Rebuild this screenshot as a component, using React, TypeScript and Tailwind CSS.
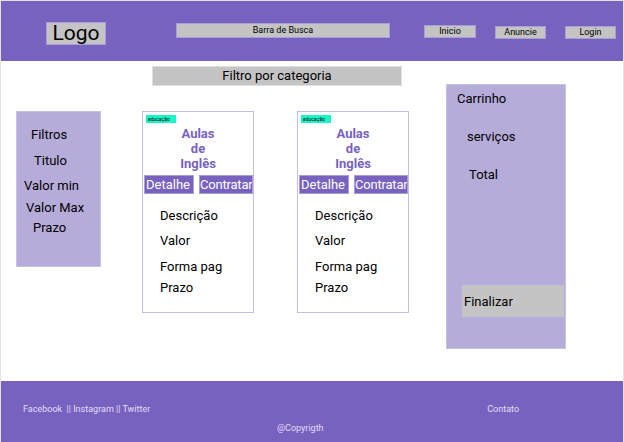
export default function App() {
  return (
    <div className="w-[624px] h-[442px] border border-[#e2e2e2] border-b-0 bg-white flex flex-col overflow-hidden font-['Roboto',sans-serif] text-black">
      {/* Header */}
      <header className="h-[60px] bg-[#7862bf] flex items-start shrink-0">
        <div className="ml-[45px] mt-[21px] w-[60px] h-[23px] bg-[#c4c4c4] border border-[#a99cd9] flex items-center justify-center text-[21px] leading-none">
          Logo
        </div>
        <div className="ml-[70px] mt-[22px] w-[214px] h-[15px] bg-[#c4c4c4] border border-[#a99cd9] flex items-center justify-center text-[9px] leading-none">
          Barra de Busca
        </div>
        <div className="ml-[34px] mt-[24px] w-[52px] h-[13px] bg-[#c4c4c4] border border-[#a99cd9] flex items-center justify-center text-[9px] leading-none">
          Inicio
        </div>
        <div className="ml-[19px] mt-[25px] w-[51px] h-[13px] bg-[#c4c4c4] border border-[#a99cd9] flex items-center justify-center text-[9px] leading-none">
          Anuncie
        </div>
        <div className="ml-[19px] mt-[25px] w-[51px] h-[13px] bg-[#c4c4c4] border border-[#a99cd9] flex items-center justify-center text-[9px] leading-none">
          Login
        </div>
      </header>

      {/* Main */}
      <main className="flex-1 flex items-start">
        <div className="flex flex-col">
          <div className="ml-[151px] mt-[5px] w-[250px] h-[20px] bg-[#c4c4c4] border border-[#e0e0e0] flex items-center justify-center text-[13px]">
            Filtro por categoria
          </div>
          <div className="flex items-start mt-[25px]">
            <div className="ml-[15px] w-[85px] h-[156px] bg-[#b5acd9] border border-[#c9c1e8] flex flex-col text-[13px] leading-none">
              <span className="ml-[14px] mt-[16px]">Filtros</span>
              <span className="ml-[17px] mt-[13px]">Titulo</span>
              <span className="ml-[7px] mt-[12px]">Valor min</span>
              <span className="ml-[9px] mt-[9px]">Valor Max</span>
              <span className="ml-[16px] mt-[7px]">Prazo</span>
            </div>
            <Card className="ml-[41px]" />
            <Card className="ml-[43px]" />
          </div>
        </div>
        <div className="ml-[37px] mt-[23px] w-[120px] h-[265px] bg-[#b5acd9] border border-[#c9c1e8] flex flex-col text-[13px] leading-none">
          <span className="ml-[10px] mt-[7px]">Carrinho</span>
          <span className="ml-[20px] mt-[25px]">serviços</span>
          <span className="ml-[22px] mt-[25px]">Total</span>
          <div className="ml-[15px] mt-[104px] w-[102px] h-[32px] bg-[#c4c4c4] flex items-center pl-[2px]">
            Finalizar
          </div>
        </div>
      </main>

      {/* Footer */}
      <footer className="h-[61px] bg-[#7862bf] shrink-0 flex flex-col text-[9px] leading-none text-[#e3def7]">
        <div className="flex mt-[24px]">
          <span className="ml-[22px] whitespace-pre">Facebook  || Instagram || Twitter</span>
          <span className="ml-[337px]">Contato</span>
        </div>
        <span className="ml-[276px] mt-[10px]">@Copyrigth</span>
      </footer>
    </div>
  );
}

function Card({ className }: { className: string }) {
  return (
    <div className={`${className} w-[112px] h-[202px] border border-[#c5bde6] bg-white flex flex-col overflow-hidden`}>
      <div className="ml-[3px] mt-[3px] w-[30px] h-[8px] bg-[#1af5c8] text-[5px] leading-[8px] pl-[2px]">educação</div>
      <div className="text-center text-[13px] font-bold text-[#7862bf] leading-[15px] mt-[3px]">
        Aulas
        <br />
        de
        <br />
        Inglês
      </div>
      <div className="flex mt-[4px] ml-[1px] gap-[5px]">
        <div className="w-[50px] h-[19px] bg-[#7862bf] border border-[#a99cd9] text-white text-[13px] leading-[17px] flex items-center pl-[1px] overflow-hidden whitespace-nowrap">
          Detalhe
        </div>
        <div className="w-[54px] h-[19px] bg-[#7862bf] border border-[#a99cd9] text-white text-[13px] tracking-[-0.2px] leading-[17px] flex items-center overflow-hidden whitespace-nowrap">
          Contratar
        </div>
      </div>
      <div className="flex flex-col ml-[17px] text-[13px] leading-none">
        <span className="mt-[15px]">Descrição</span>
        <span className="mt-[12px]">Valor</span>
        <span className="mt-[13px]">Forma pag</span>
        <span className="mt-[8px]">Prazo</span>
      </div>
    </div>
  );
}
